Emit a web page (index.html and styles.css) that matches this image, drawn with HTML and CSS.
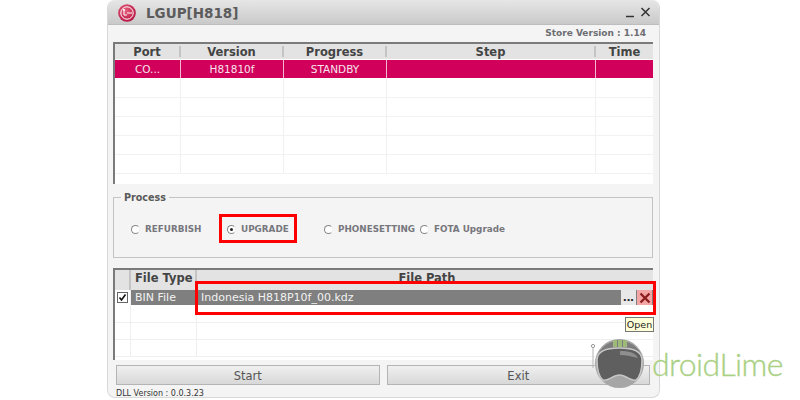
FILE: index.html
```html
<!DOCTYPE html>
<html lang="en">
<head>
<meta charset="utf-8">
<title>LGUP</title>
<link rel="stylesheet" href="styles.css">
</head>
<body>
<div class="window">
  <header class="titlebar">
    <svg class="lg-logo" width="20" height="20" viewBox="0 0 20 20">
      <defs><radialGradient id="lg" cx="40%" cy="35%" r="70%"><stop offset="0" stop-color="#e8627f"/><stop offset="1" stop-color="#b5103f"/></radialGradient></defs>
      <circle cx="10" cy="10" r="8.8" fill="url(#lg)"/>
      <circle cx="10" cy="10" r="6.2" fill="none" stroke="#fff" stroke-width="1"/>
      <path d="M7 6v6h3M10 10h5" fill="none" stroke="#fff" stroke-width="1"/>
      <circle cx="7" cy="7" r=".9" fill="#fff"/>
    </svg>
    <span class="title">LGUP[H818]</span>
    <span class="win-controls">
      <svg width="30" height="14" viewBox="0 0 30 14"><path d="M1 10.500h8" stroke="#333" stroke-width="1.500"/><path d="M16.500 2l8 8M24.500 2l-8 8" stroke="#333" stroke-width="1.500"/></svg>
    </span>
  </header>
  <div class="store">Store Version : 1.14</div>
  <section class="grid top-grid">
    <div class="row head"><div class="c port">Port</div><div class="c ver">Version</div><div class="c prog">Progress</div><div class="c step">Step</div><div class="c time">Time</div></div>
    <div class="row sel"><div class="c port">CO...</div><div class="c ver">H81810f</div><div class="c prog">STANDBY</div><div class="c step"></div><div class="c time"></div></div>
    <div class="row"><div class="c port"></div><div class="c ver"></div><div class="c prog"></div><div class="c step"></div><div class="c time"></div></div>
    <div class="row"><div class="c port"></div><div class="c ver"></div><div class="c prog"></div><div class="c step"></div><div class="c time"></div></div>
    <div class="row"><div class="c port"></div><div class="c ver"></div><div class="c prog"></div><div class="c step"></div><div class="c time"></div></div>
    <div class="row"><div class="c port"></div><div class="c ver"></div><div class="c prog"></div><div class="c step"></div><div class="c time"></div></div>
    <div class="row"><div class="c port"></div><div class="c ver"></div><div class="c prog"></div><div class="c step"></div><div class="c time"></div></div>
  </section>
  <fieldset class="process">
    <legend>Process</legend>
    <div class="opts">
      <span class="opt o1"><i class="radio"></i>REFURBISH</span>
      <span class="opt o2"><i class="radio on"></i>UPGRADE</span>
      <span class="opt o3"><i class="radio"></i>PHONESETTING</span>
      <span class="opt o4"><i class="radio"></i>FOTA Upgrade</span>
    </div>
  </fieldset>
  <section class="grid file-grid">
    <div class="frow fhead"><div class="f chk"></div><div class="f ftype">File Type</div><div class="f fpath">File Path</div></div>
    <div class="frow fsel">
      <div class="f chk"><i class="checkbox"><svg width="9" height="9" viewBox="0 0 9 9"><path d="M1.500 4.500l2 2.500 4-5.500" fill="none" stroke="#111" stroke-width="1.600"/></svg></i></div>
      <div class="f ftype">BIN File</div>
      <div class="f fpath">Indonesia H818P10f_00.kdz
        <span class="btns"><b class="more">...</b><b class="del"><svg width="12" height="12" viewBox="0 0 12 12"><path d="M1.500 1.500l9 9M10.500 1.500l-9 9" stroke="#8c1f1f" stroke-width="2.400"/></svg></b></span>
      </div>
    </div>
    <div class="frow"><div class="f chk"></div><div class="f ftype"></div><div class="f fpath"></div></div>
    <div class="frow"><div class="f chk"></div><div class="f ftype"></div><div class="f fpath"></div></div>
    <div class="frow"><div class="f chk"></div><div class="f ftype"></div><div class="f fpath"></div></div>
  </section>
  <div class="actions"><button class="btn">Start</button><button class="btn">Exit</button></div>
  <div class="dll">DLL Version : 0.0.3.23</div>
  <div class="mark mark-upgrade"></div>
  <div class="mark mark-file"></div>
  <div class="tooltip">Open</div>
</div>
<div class="brand">
  <svg class="helmet" width="56" height="56" viewBox="0 0 56 56">
    <path d="M3 12v20" stroke="#b5b5b5" stroke-width="1"/><circle cx="3" cy="10" r="1.600" fill="#fff" stroke="#999"/>
    <circle cx="29.500" cy="27.500" r="24.500" fill="#a6a6a6"/>
    <path d="M8 18a24 24 0 0 1 43 0z" fill="#7d7d7d"/>
    <path d="M23 4h14v7H23z" fill="#9dba78"/>
    <path d="M27.500 4v7M32.500 4v7" stroke="#7d7d7d" stroke-width="1"/>
    <path d="M7 24c0-9 10-12 22.500-12S52 15 52 24c0 9-2 17-6 20-4 2-10-5-16.500-5S17 46 13 44c-4-3-6-11-6-20z" fill="#5f5f5f" stroke="#c8c8c8" stroke-width="1.500"/>
    <path d="M30 15c8 0 15 1 18 7-7-2-13-3-18-3z" fill="#8e8e8e"/>
  </svg>
  <span class="brand-text">droidLime</span>
</div>
</body>
</html>
```
FILE: styles.css
```css
* { box-sizing: border-box; }
html, body { margin: 0; padding: 0; }
body { width: 800px; height: 400px; background: #fff; position: relative; overflow: hidden; font-family: "DejaVu Sans", sans-serif; }
.window { position: relative; width: 553px; height: 398px; margin-left: 107px; padding: 0 7px 0 5px; background: #f4f4f4; border: 1px solid #d8d8d8; border-top: 0; border-radius: 8px; display: flex; flex-direction: column; }
.titlebar { flex: none; height: 25px; margin: 0 -7px 0 -5px; padding: 2px 4px 0 9px; background: linear-gradient(#e6e6e6, #c9c9c9); border-bottom: 1px solid #bdbdbd; border-radius: 8px 8px 0 0; display: flex; align-items: center; }
.lg-logo { flex: none; }
.title { margin-left: 9px; font: bold 13.500px "DejaVu Sans", sans-serif; color: #5c5c5c; }
.win-controls { margin-left: auto; display: flex; }
.store { flex: none; height: 17px; padding: 3px 6px 0 0; text-align: right; font: bold 9px "DejaVu Sans", sans-serif; color: #6d6d72; white-space: nowrap; }
.grid { flex: none; background: #fff; border-top: 2px solid #7a7a7a; border-left: 2px solid #7a7a7a; }
.top-grid { height: 142px; width: 540px; }
.row { display: flex; height: 19px; border-bottom: 1px solid #f2f2f2; }
.c { height: 100%; border-right: 1px solid #f0f0f0; text-align: center; font-size: 10.500px; line-height: 19px; white-space: nowrap; }
.port { width: 66px; } .ver { width: 103px; } .prog { width: 103px; } .step { width: 209px; } .time { flex: 1; border-right: 0; }
.head { height: 15px; background: #e3e3e3; border: 0; }
.head .c { font-weight: bold; font-size: 11.500px; color: #444; border-right: 2px solid #c4c4c4; height: 11px; margin-top: 2px; line-height: 13px; }
.head .time { border-right: 0; }
.sel { background: #d0005b; color: #f7e4ec; border-top: 1px solid #fff; height: 20px; border-bottom: 1px solid #fff; }
.sel .c { border-right-color: #efb8cf; }
.process { flex: none; height: 66px; width: 540px; margin: 8px 0 0; padding: 0; border: 1px solid #c4c4c4; }
.process legend { margin-left: 7px; padding: 0 3px; font: bold 9.600px "DejaVu Sans", sans-serif; color: #5a5a5a; }
.opts { height: 100%; display: flex; padding: 19px 0 0 17px; }
.opt { display: flex; align-items: center; height: 14px; font: bold 8.800px "DejaVu Sans", sans-serif; color: #77777d; white-space: nowrap; }
.o1 { width: 96px; } .o2 { width: 97px; } .o3 { width: 96px; }
.radio { flex: none; width: 9px; height: 9px; margin-right: 5px; border: 1px solid #888; border-right-color: #eee; border-radius: 50%; background: #fff; position: relative; }
.radio.on::after { content: ""; position: absolute; left: 2px; top: 2px; width: 3px; height: 3px; border-radius: 50%; background: #222; }
.file-grid { width: 540px; height: 92px; margin-top: 10px; }
.frow { display: flex; height: 17px; border-bottom: 1px solid #f0f0f0; }
.f { height: 100%; border-right: 1px solid #efefef; font-size: 10.500px; line-height: 16px; white-space: nowrap; }
.chk { width: 16px; flex: none; display: flex; align-items: center; justify-content: center; }
.ftype { width: 66px; flex: none; padding-left: 4px; }
.fpath { flex: 1; border-right: 0; padding-left: 4px; position: relative; }
.fhead { height: 20px; background: #e3e3e3; border: 0; }
.fhead .f { font-weight: bold; font-size: 11.500px; line-height: 17px; color: #444; border-right: 2px solid #c4c4c4; }
.fhead .fpath { text-align: center; border-right: 0; }
.fsel { height: 16px; border-bottom: 1px solid #fff; }
.fsel .ftype, .fsel .fpath { background: #7f7f7f; color: #f2f2f2; border-right: 0; }
.fsel .ftype { font-size: 11px; }
.fsel .fpath { font-size: 11px; }
.checkbox { width: 11px; height: 11px; background: #fff; border: 1px solid #666; display: flex; align-items: center; justify-content: center; }
.btns { position: absolute; right: 1px; top: 0; height: 15px; display: flex; gap: 1px; }
.more { width: 15px; background: #e8e8e8; color: #222; text-align: center; font: bold 13px/14px "Liberation Sans", sans-serif; }
.del { width: 15px; background: #f4a6a6; display: flex; align-items: center; justify-content: center; }
.actions { flex: none; display: flex; gap: 7px; margin: 5px 2px 0 3px; }
.btn { flex: 1; height: 20px; padding: 1px 0 0; background: linear-gradient(#f0f0f0, #d8d8d8); border: 1px solid #b4b4b4; font: 11.500px "DejaVu Sans", sans-serif; color: #555; }
.dll { flex: none; margin: 4px 0 0 3px; font-size: 8px; color: #333; white-space: nowrap; }
.mark { position: absolute; border: 3px solid #f00; }
.mark-upgrade { left: 111px; top: 214px; width: 78px; height: 29px; }
.mark-file { left: 87px; top: 281px; width: 461px; height: 34px; }
.tooltip { position: absolute; left: 517px; top: 317px; width: 29px; height: 15px; background: #ffffd8; border: 1px solid #777; font-size: 9.500px; line-height: 13px; text-align: center; color: #222; }
.brand { position: absolute; left: 590px; top: 336px; display: flex; align-items: flex-end; }
.helmet { flex: none; }
.brand-text { margin: 0 0 12px 6px; font: 300 32px/1 Lato, sans-serif; color: #a9d184; -webkit-text-stroke: .35px #a9d184; letter-spacing: -.6px; }
```
